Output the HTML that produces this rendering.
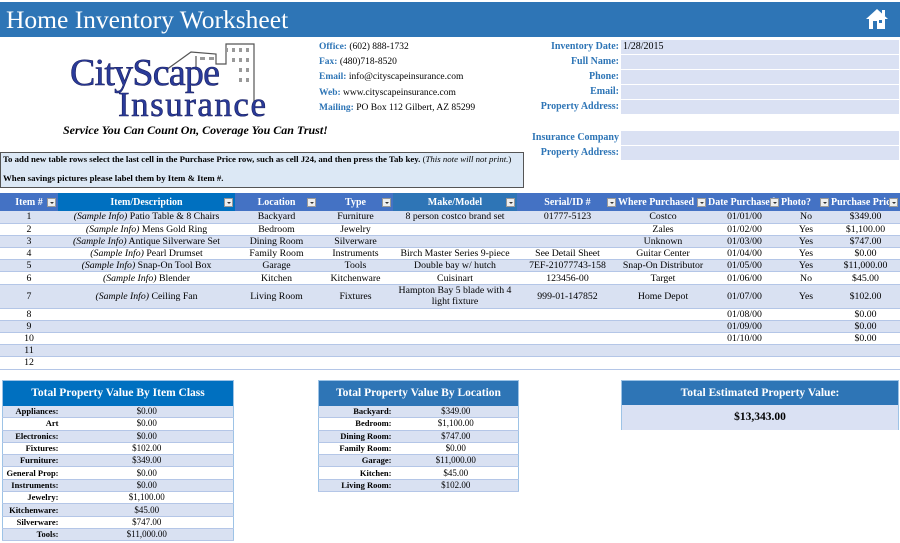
<!DOCTYPE html>
<html><head><meta charset="utf-8">
<style>
*{margin:0;padding:0;box-sizing:border-box}
body{width:900px;height:543px;overflow:hidden;background:#fff;font-family:"Liberation Serif",serif;color:#000;position:relative}
.a{position:absolute}
.bar{left:0;top:2px;width:900px;height:35px;background:#2e75b6}
.title{left:6px;top:4px;color:#fff;font-size:25.5px;line-height:32px}
.ct{left:319px;font-size:9.5px;line-height:12px}
.ct b{color:#2e75b6}
.fl{width:160px;left:459px;text-align:right;font-size:10px;font-weight:bold;color:#2e75b6;line-height:14px}
.ff{left:621px;width:278px;height:14px;background:#dae1f3;font-size:10px;line-height:14px;padding-left:2px}
table{border-collapse:collapse;position:absolute;table-layout:fixed}
.main{left:0;top:193px;width:900px;font-size:9.8px}
.main th{background:#4472c4;color:#fff;font-weight:bold;height:18px;font-size:10px;position:relative;text-align:center;white-space:nowrap;overflow:hidden}
.main th i{position:absolute;right:2px;top:5px;width:9px;height:9px;background:#eee;border:1px solid #999}
.main th i:after{content:"";position:absolute;left:2px;top:3px;border-left:2px solid transparent;border-right:2px solid transparent;border-top:2px solid #333}
.main td{text-align:center;height:12.2px;line-height:11px;border-bottom:1px solid #b4c6e7;white-space:nowrap;overflow:hidden}
.main tr:nth-child(even) td{background:#d9e1f2}
.sm{font-size:9px}
.sm th{color:#fff;font-size:11.5px;height:25px}
.sm td{height:12.3px;line-height:11px;border-bottom:1px solid #b4c6e7}
.sm td.l{text-align:right;font-weight:bold;font-size:8.5px;padding-right:2px}
.sm td.v{text-align:center}
.sm tr:nth-child(even) td{background:#d9e1f2}
</style></head><body>
<div class="a bar"></div>
<div class="a title">Home Inventory Worksheet</div>
<svg class="a" style="left:865px;top:7px" width="24" height="24" viewBox="0 0 24 24"><path d="M12 2 L1 12 H4 V22 H20 V12 H23 Z" fill="#fff"/><rect x="17" y="3" width="3" height="6" fill="#fff"/><rect x="8" y="14" width="4" height="8" fill="#2e75b6"/><rect x="14" y="13" width="3" height="3" fill="#2e75b6"/></svg>

<svg class="a" style="left:66px;top:40px" width="205" height="80" viewBox="0 0 205 80">
<g fill="none" stroke="#555" stroke-width="1.2">
<path d="M100 30 L125 12 L150 14 L150 24 L160 24 L160 4 L188 4 L188 75"/>
<path d="M130 16 L130 30"/>
</g>
<g fill="#999">
<rect x="159" y="8" width="3" height="4"/><rect x="166" y="8" width="3" height="4"/><rect x="173" y="8" width="3" height="4"/><rect x="180" y="8" width="3" height="4"/>
<rect x="166" y="18" width="3" height="4"/><rect x="173" y="18" width="3" height="4"/><rect x="180" y="18" width="3" height="4"/>
<rect x="173" y="28" width="3" height="4"/><rect x="180" y="28" width="3" height="4"/>
<rect x="173" y="38" width="3" height="4"/><rect x="180" y="38" width="3" height="4"/>
<rect x="134" y="17" width="5" height="3"/><rect x="143" y="17" width="5" height="3"/>
</g>
<text x="4" y="45" font-family="Liberation Serif" font-size="38" fill="#2a3b9a" stroke="#1a2060" stroke-width="0.6" textLength="150">CityScape</text>
<text x="52" y="76" font-family="Liberation Serif" font-size="35" fill="#2a3b9a" stroke="#1a2060" stroke-width="0.6" textLength="148">Insurance</text>
</svg>
<div class="a" style="left:63px;top:123px;font-size:12px;font-weight:bold;font-style:italic;white-space:nowrap">Service You Can Count On, Coverage You Can Trust!</div>

<div class="a ct" style="top:41px"><b>Office:</b> (602) 888-1732</div>
<div class="a ct" style="top:56px"><b>Fax:</b> (480)718-8520</div>
<div class="a ct" style="top:71px"><b>Email:</b> info@cityscapeinsurance.com</div>
<div class="a ct" style="top:87px"><b>Web:</b> www.cityscapeinsurance.com</div>
<div class="a ct" style="top:102px"><b>Mailing:</b> PO Box 112 Gilbert, AZ 85299</div>

<div class="a fl" style="top:40px">Inventory Date:</div><div class="a ff" style="top:40px">1/28/2015</div>
<div class="a fl" style="top:55px">Full Name:</div><div class="a ff" style="top:55px"></div>
<div class="a fl" style="top:70px">Phone:</div><div class="a ff" style="top:70px"></div>
<div class="a fl" style="top:85px">Email:</div><div class="a ff" style="top:85px"></div>
<div class="a fl" style="top:100px">Property Address:</div><div class="a ff" style="top:100px"></div>
<div class="a fl" style="top:131px">Insurance Company</div><div class="a ff" style="top:131px"></div>
<div class="a fl" style="top:146px">Property Address:</div><div class="a ff" style="top:146px"></div>

<div class="a" style="left:0;top:152px;width:524px;height:36px;background:#dce8f5;border:1px solid #555;font-size:8.8px;font-weight:bold">
<div style="position:absolute;top:1px;left:2px;white-space:nowrap">To add new table rows select the last cell in the Purchase Price row, such as cell J24, and then press the Tab key. <span style="font-weight:normal">(<i>This note will not print.</i>)</span></div>
<div style="position:absolute;top:20px;left:2px">When savings pictures please label them by Item &amp; Item #.</div>
</div>

<table class="main">
<colgroup><col style="width:58px"><col style="width:177px"><col style="width:83px"><col style="width:75px"><col style="width:124px"><col style="width:101px"><col style="width:90px"><col style="width:73px"><col style="width:50px"><col style="width:69px"></colgroup>
<tr><th>Item #<i></i></th><th style="background:#0070c0">Item/Description<i></i></th><th>Location<i></i></th><th>Type<i></i></th><th style="background:#2e75b6">Make/Model<i></i></th><th>Serial/ID #<i></i></th><th style="text-align:left">Where Purchased<i></i></th><th style="text-align:left">Date Purchased<i></i></th><th style="text-align:left">Photo?<i></i></th><th style="text-align:left">Purchase Price<i></i></th></tr>
<tr><td>1</td><td><i>(Sample Info)</i> Patio Table &amp; 8 Chairs</td><td>Backyard</td><td>Furniture</td><td>8 person costco brand set</td><td>01777-5123</td><td>Costco</td><td>01/01/00</td><td>No</td><td>$349.00</td></tr>
<tr><td>2</td><td><i>(Sample Info)</i> Mens Gold Ring</td><td>Bedroom</td><td>Jewelry</td><td></td><td></td><td>Zales</td><td>01/02/00</td><td>Yes</td><td>$1,100.00</td></tr>
<tr><td>3</td><td><i>(Sample Info)</i> Antique Silverware Set</td><td>Dining Room</td><td>Silverware</td><td></td><td></td><td>Unknown</td><td>01/03/00</td><td>Yes</td><td>$747.00</td></tr>
<tr><td>4</td><td><i>(Sample Info)</i> Pearl Drumset</td><td>Family Room</td><td>Instruments</td><td>Birch Master Series 9-piece</td><td>See Detail Sheet</td><td>Guitar Center</td><td>01/04/00</td><td>Yes</td><td>$0.00</td></tr>
<tr><td>5</td><td><i>(Sample Info)</i> Snap-On Tool Box</td><td>Garage</td><td>Tools</td><td>Double bay w/ hutch</td><td>7EF-21077743-158</td><td>Snap-On Distributor</td><td>01/05/00</td><td>Yes</td><td>$11,000.00</td></tr>
<tr><td>6</td><td><i>(Sample Info)</i> Blender</td><td>Kitchen</td><td>Kitchenware</td><td>Cuisinart</td><td>123456-00</td><td>Target</td><td>01/06/00</td><td>No</td><td>$45.00</td></tr>
<tr><td style="height:24px">7</td><td><i>(Sample Info)</i> Ceiling Fan</td><td>Living Room</td><td>Fixtures</td><td style="white-space:normal">Hampton Bay 5 blade with 4 light fixture</td><td>999-01-147852</td><td>Home Depot</td><td>01/07/00</td><td>Yes</td><td>$102.00</td></tr>
<tr><td>8</td><td></td><td></td><td></td><td></td><td></td><td></td><td>01/08/00</td><td></td><td>$0.00</td></tr>
<tr><td>9</td><td></td><td></td><td></td><td></td><td></td><td></td><td>01/09/00</td><td></td><td>$0.00</td></tr>
<tr><td>10</td><td></td><td></td><td></td><td></td><td></td><td></td><td>01/10/00</td><td></td><td>$0.00</td></tr>
<tr><td>11</td><td></td><td></td><td></td><td></td><td></td><td></td><td></td><td></td><td></td></tr>
<tr><td>12</td><td></td><td></td><td></td><td></td><td></td><td></td><td></td><td></td><td></td></tr>
</table>

<table class="sm" style="left:2px;top:380px;width:232px;border:1px solid #9dc3e6">
<colgroup><col style="width:58px"><col></colgroup>
<tr><th colspan="2" style="background:#0070c0">Total Property Value By Item Class</th></tr>
<tr><td class="l">Appliances:</td><td class="v">$0.00</td></tr>
<tr><td class="l">Art</td><td class="v">$0.00</td></tr>
<tr><td class="l">Electronics:</td><td class="v">$0.00</td></tr>
<tr><td class="l">Fixtures:</td><td class="v">$102.00</td></tr>
<tr><td class="l">Furniture:</td><td class="v">$349.00</td></tr>
<tr><td class="l">General Prop:</td><td class="v">$0.00</td></tr>
<tr><td class="l">Instruments:</td><td class="v">$0.00</td></tr>
<tr><td class="l">Jewelry:</td><td class="v">$1,100.00</td></tr>
<tr><td class="l">Kitchenware:</td><td class="v">$45.00</td></tr>
<tr><td class="l">Silverware:</td><td class="v">$747.00</td></tr>
<tr><td class="l">Tools:</td><td class="v">$11,000.00</td></tr>
</table>

<table class="sm" style="left:318px;top:380px;width:201px;border:1px solid #9dc3e6">
<colgroup><col style="width:75px"><col></colgroup>
<tr><th colspan="2" style="background:#2e75b6">Total Property Value By Location</th></tr>
<tr><td class="l">Backyard:</td><td class="v">$349.00</td></tr>
<tr><td class="l">Bedroom:</td><td class="v">$1,100.00</td></tr>
<tr><td class="l">Dining Room:</td><td class="v">$747.00</td></tr>
<tr><td class="l">Family Room:</td><td class="v">$0.00</td></tr>
<tr><td class="l">Garage:</td><td class="v">$11,000.00</td></tr>
<tr><td class="l">Kitchen:</td><td class="v">$45.00</td></tr>
<tr><td class="l">Living Room:</td><td class="v">$102.00</td></tr>
</table>

<div class="a" style="left:621px;top:380px;width:278px;height:50px;border:1px solid #9dc3e6">
<div style="height:24px;background:#2e75b6;color:#fff;font-weight:bold;font-size:11.5px;text-align:center;line-height:24px">Total Estimated Property Value:</div>
<div style="height:25px;background:#dae1f3;font-weight:bold;font-size:11.5px;text-align:center;line-height:25px">$13,343.00</div>
</div>
</body></html>
